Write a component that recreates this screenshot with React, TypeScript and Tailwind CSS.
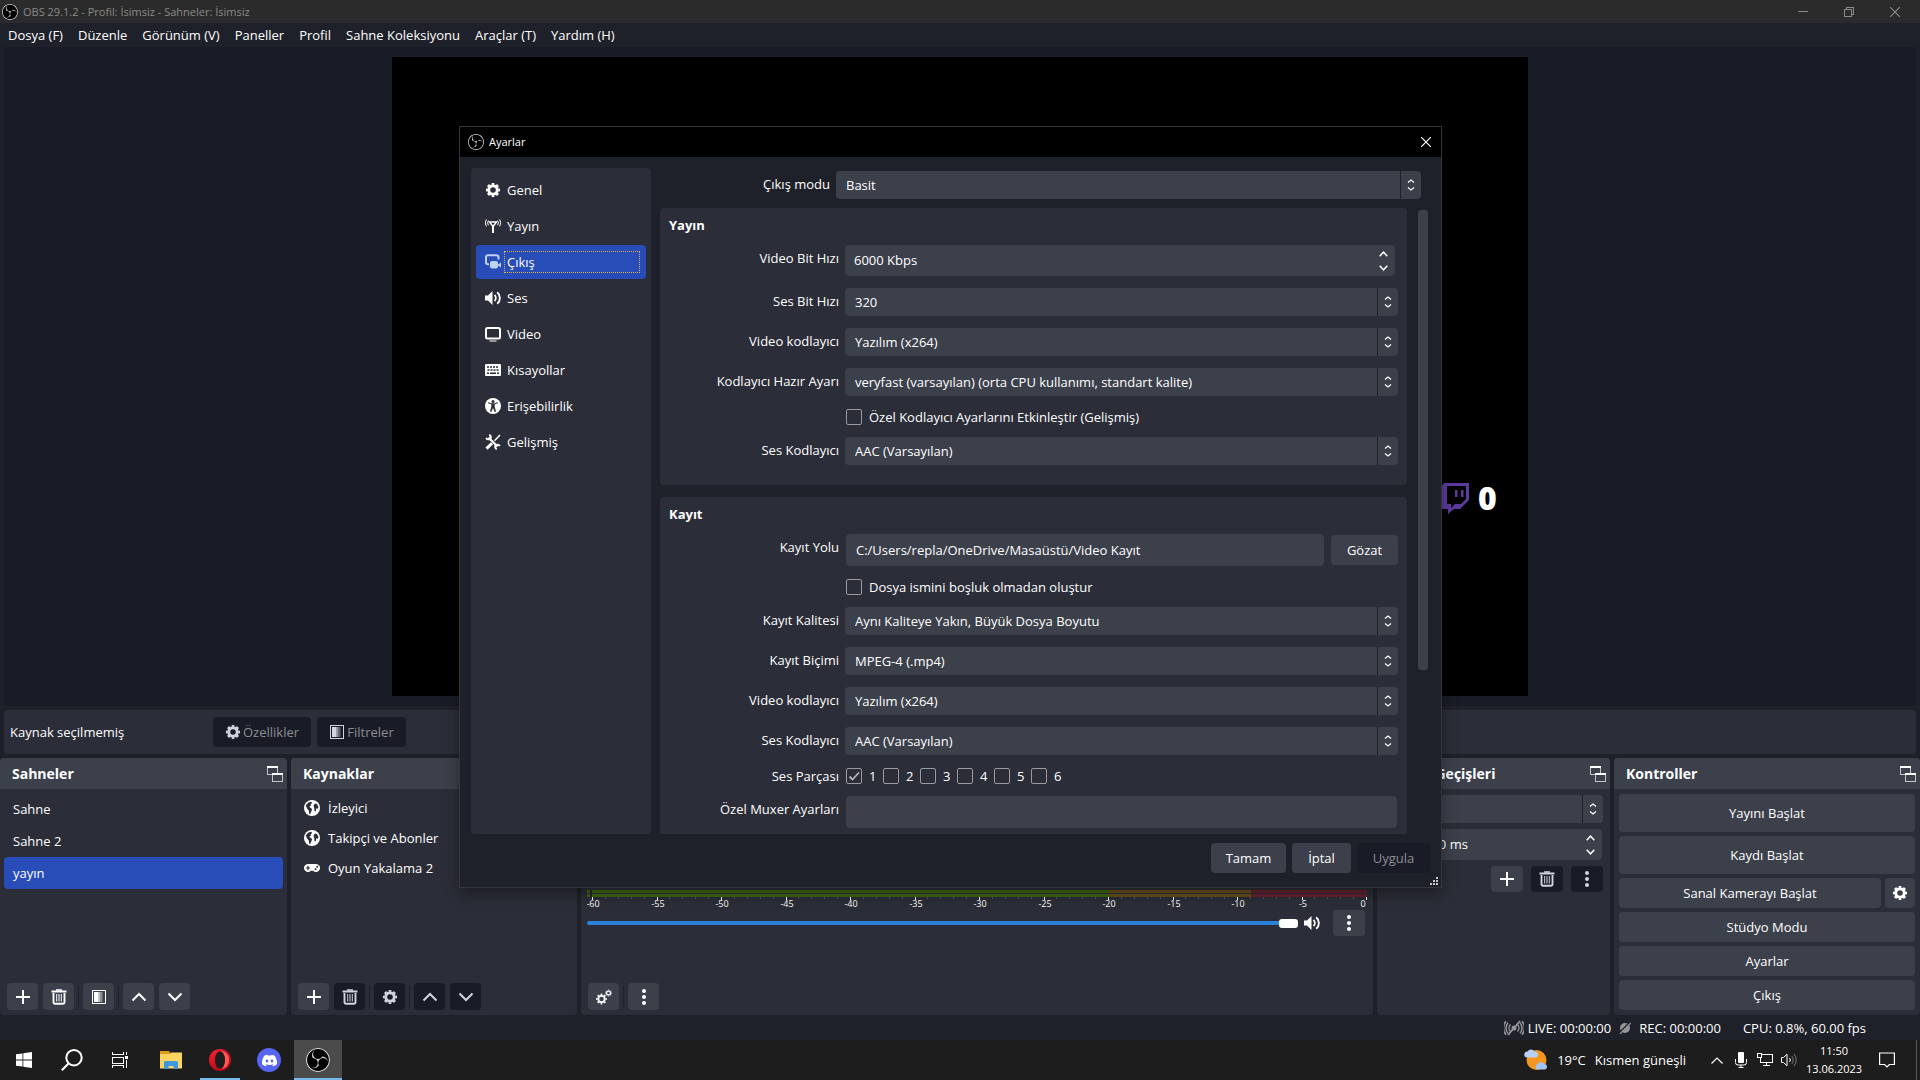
import type { ReactNode } from 'react';
import { FaGamepad } from 'react-icons/fa';
import { SiDiscord, SiObsstudio } from 'react-icons/si';

interface IconProps {
  className?: string;
}

function GearIcon({ className = 'w-4 h-4' }: IconProps) {
  return (
    <svg viewBox="0 0 16 16" className={className} fill="none" stroke="currentColor">
      <circle cx="8" cy="8" r="4.3" strokeWidth="3" />
      <circle cx="8" cy="8" r="6.2" strokeWidth="1.8" pathLength="16" strokeDasharray="1.1 0.9" strokeDashoffset="0.55" />
    </svg>
  );
}

function GearsIcon() {
  return (
    <svg viewBox="0 0 16 16" className="w-4 h-4" fill="none" stroke="currentColor">
      <circle cx="5.5" cy="10" r="3.2" strokeWidth="1.8" />
      <circle cx="5.5" cy="10" r="4.7" strokeWidth="1.4" pathLength="16" strokeDasharray="1 1" strokeDashoffset="0.5" />
      <circle cx="12.5" cy="4" r="1.9" strokeWidth="1.2" />
      <circle cx="12.5" cy="4" r="3" strokeWidth="1" pathLength="16" strokeDasharray="1 1" strokeDashoffset="0.5" />
    </svg>
  );
}

function AntennaIcon() {
  return (
    <svg viewBox="0 0 16 16" className="w-4 h-4" fill="none" stroke="currentColor">
      <path d="M8 7v8" strokeWidth="2" />
      <path d="M4.5 4h7L8 8.5z" strokeWidth="1.4" />
      <path d="M3.4 2.6a4 4 0 0 0 0 4.6M12.6 2.6a4 4 0 0 1 0 4.6M1.4 1.4a6.5 6.5 0 0 0 0 7M14.6 1.4a6.5 6.5 0 0 1 0 7" strokeWidth="1" />
    </svg>
  );
}

function OutputIcon() {
  return (
    <svg viewBox="0 0 16 16" className="w-4 h-4 text-[#bcd3f5]">
      <path d="M4 10.2H3A1.8 1.8 0 0 1 1 8.4V3.2A2 2 0 0 1 3 1.2h8.5a2 2 0 0 1 2 2V5.5" fill="none" stroke="currentColor" strokeWidth="2" />
      <rect x="5" y="7" width="8" height="7.5" rx="2" fill="currentColor" />
      <path d="M13 10.5l3-2v5l-3-2z" fill="currentColor" />
    </svg>
  );
}

function SpeakerIcon() {
  return (
    <svg viewBox="0 0 16 16" className="w-4 h-4" fill="none" stroke="currentColor">
      <path d="M0 5.5h3L7.5 1v14L3 10.5H0z" fill="currentColor" stroke="none" />
      <path d="M9.5 5a4 4 0 0 1 0 6" strokeWidth="1.7" />
      <path d="M12.2 2.2a7.6 7.6 0 0 1 0 11.6" strokeWidth="1.9" />
    </svg>
  );
}

function DisplayIcon() {
  return (
    <svg viewBox="0 0 16 16" className="w-4 h-4" fill="none" stroke="currentColor">
      <rect x="1" y="2" width="14" height="10.5" rx="1.5" strokeWidth="2" />
      <path d="M4.500 15h7" strokeWidth="1" />
    </svg>
  );
}

function KeyboardIcon() {
  return (
    <svg viewBox="0 0 16 16" className="w-4 h-4">
      <rect x="0" y="2" width="16" height="12" rx="1" fill="currentColor" />
      <path d="M2 5h12M2.500 8h11" stroke="#2b2d38" strokeWidth="1.7" strokeDasharray="2 1" />
      <path d="M2 11.2h2M5 11.2h6M12 11.2h2" stroke="#2b2d38" strokeWidth="1.5" />
    </svg>
  );
}

function AccessibilityIcon() {
  return (
    <svg viewBox="0 0 16 16" className="w-4 h-4">
      <circle cx="8" cy="8" r="8" fill="currentColor" />
      <circle cx="8" cy="3.4" r="1.5" fill="#2b2d38" />
      <path d="M3 5.200l3.300 1v2.600L5 13.500l1.300.4L8 10l1.700 3.900 1.300-.4-1.300-4.700V6.200l3.300-1-.3-.9-3.200.9H6.500l-3.200-.9z" fill="#2b2d38" />
    </svg>
  );
}

function ToolsIcon() {
  return (
    <svg viewBox="0 0 16 16" className="w-4 h-4" fill="none" stroke="currentColor">
      <path d="M3.500 3.500l9 9" strokeWidth="2.2" />
      <path d="M1.200 3.800A2.600 2.600 0 0 0 5.500 4.500 2.600 2.600 0 0 0 4.200.8M14.800 12.200a2.600 2.600 0 0 0-4.300-.7 2.600 2.600 0 0 0 1.300 3.700" strokeWidth="1.9" />
      <path d="M15 1L9.500 6.800" strokeWidth="1.5" />
      <path d="M7 9.200L1.500 14.600" strokeWidth="3" />
    </svg>
  );
}

function GlobeIcon() {
  return (
    <svg viewBox="0 0 16 16" className="w-4 h-4">
      <circle cx="8" cy="8" r="8" fill="currentColor" />
      <path d="M1.800 5.200L4.500 2.500l3-.8.5 1.500-1.500 1 .5 1.500-1.800 1 1.800 1.500 1.200.8-.7 2-1.300 3-1-.3-.4-3.200L3 8.500z" fill="#2b2d38" />
      <path d="M9.500 5.500l1.500-2 2 .5 1.500 3-.8 2-1.200-1-.8 3.500-1.200-.5-.3-3z" fill="#2b2d38" />
    </svg>
  );
}

function FilterIcon({ className = 'w-4 h-4' }: IconProps) {
  return (
    <svg viewBox="0 0 16 16" className={className} fill="currentColor" shapeRendering="crispEdges">
      <rect x="1.5" y="1.5" width="13" height="13" fill="none" stroke="currentColor" />
      <rect x="3" y="3" width="4" height="10" />
      <rect x="7" y="3" width="2" height="10" opacity="0.7" />
      <rect x="9" y="3" width="2" height="10" opacity="0.4" />
      <rect x="11" y="3" width="1" height="10" opacity="0.2" />
    </svg>
  );
}

function PlusIcon() {
  return (
    <svg viewBox="0 0 16 16" className="w-4 h-4" stroke="currentColor" strokeWidth="2" shapeRendering="crispEdges">
      <path d="M8 1v14M1 8h14" />
    </svg>
  );
}

function TrashIcon() {
  return (
    <svg viewBox="0 0 16 16" className="w-4 h-4" fill="none" stroke="currentColor">
      <path d="M.5 2.500h15" strokeWidth="1.8" />
      <path d="M5 1h6" strokeWidth="1.4" />
      <path d="M2.500 4v9a1.800 1.800 0 0 0 1.800 1.800h7.400a1.800 1.800 0 0 0 1.800-1.800V4" strokeWidth="1.9" />
      <path d="M5.700 5v7.500M8 5v7.500M10.300 5v7.500" strokeWidth="1" />
    </svg>
  );
}

function ChevronIcon({ down = false }: { down?: boolean }) {
  return (
    <svg viewBox="0 0 16 16" className="w-4 h-4" fill="none" stroke="currentColor" strokeWidth="2">
      <path d={down ? 'M1.500 4.500L8 11l6.500-6.500' : 'M1.500 11.500L8 5l6.500 6.500'} />
    </svg>
  );
}

function DotsIcon() {
  return (
    <svg viewBox="0 0 16 16" className="w-4 h-4" fill="currentColor">
      <circle cx="8" cy="2" r="2" />
      <circle cx="8" cy="8" r="2" />
      <circle cx="8" cy="14" r="2" />
    </svg>
  );
}

function PopoutIcon() {
  return (
    <svg viewBox="0 0 16 16" className="w-4 h-4" fill="#3c404b" stroke="#c4c5c9" shapeRendering="crispEdges">
      <rect x="0.5" y="1" width="10" height="7.5" />
      <path d="M0 1h11" stroke="#fff" strokeWidth="2" />
      <rect x="5.5" y="8" width="10" height="7.5" />
      <path d="M5 8h11" stroke="#fff" strokeWidth="2" />
    </svg>
  );
}

function CloseIcon() {
  return (
    <svg viewBox="0 0 10 10" className="w-[10px] h-[10px]" stroke="currentColor" strokeWidth="1.2">
      <path d="M0 0l10 10M10 0L0 10" />
    </svg>
  );
}

function ObsLogo({ className }: { className: string }) {
  return (
    <span className="rounded-full bg-black text-[#d8d8d8]">
      <SiObsstudio className={className} />
    </span>
  );
}

interface FieldProps {
  id: string;
  value: string;
  ariaLabel?: string;
}

function Combo({ id, value, ariaLabel }: FieldProps) {
  return (
    <div className="relative h-7 w-full">
      <select id={id} aria-label={ariaLabel} defaultValue={value} className="h-7 w-full appearance-none rounded bg-[#3c404b] pl-[10px] pr-6 text-white outline-none">
        <option>{value}</option>
      </select>
      <span className="pointer-events-none absolute inset-y-0 right-0 flex w-[21px] items-center justify-center border-l border-[#1f212a]">
        <svg viewBox="0 0 8 14" className="h-[14px] w-2" fill="none" stroke="#fff" strokeWidth="1.2">
          <path d="M1 4.500L4 2l3 2.500M1 9.500L4 12l3-2.500" />
        </svg>
      </span>
    </div>
  );
}

function Spin({ id, value, ariaLabel }: FieldProps) {
  return (
    <div className="relative h-[31px] min-w-0 flex-1">
      <input id={id} aria-label={ariaLabel} type="text" defaultValue={value} className="h-full w-full rounded bg-[#3c404b] px-[9px] pb-[2px] text-white outline-none" />
      <div className="absolute inset-y-0 right-[7px] flex flex-col justify-center gap-1">
        <button type="button" aria-label="+" className="flex h-[10px] items-center">
          <svg viewBox="0 0 9 6" className="h-[6px] w-[9px]" fill="none" stroke="#fff" strokeWidth="1.5">
            <path d="M.7 5.200L4.500 1.200l3.800 4" />
          </svg>
        </button>
        <button type="button" aria-label="-" className="flex h-[10px] items-center">
          <svg viewBox="0 0 9 6" className="h-[6px] w-[9px]" fill="none" stroke="#fff" strokeWidth="1.5">
            <path d="M.7.8l3.800 4 3.800-4" />
          </svg>
        </button>
      </div>
    </div>
  );
}

function Check({ label, checked = false }: { label: string; checked?: boolean }) {
  return (
    <label className="flex h-[17px] items-center gap-[7px] pl-px">
      <span className="grid h-4 w-4">
        <input type="checkbox" defaultChecked={checked} className="peer col-start-1 row-start-1 h-4 w-4 appearance-none rounded-[2px] border border-[#9a9a9e]" />
        <svg viewBox="0 0 16 16" className="pointer-events-none invisible col-start-1 row-start-1 h-4 w-4 peer-checked:visible" fill="none" stroke="#b4b4b8" strokeWidth="1.8">
          <path d="M3.500 8.500l3 3 6.500-7" />
        </svg>
      </span>
      {label}
    </label>
  );
}

interface RowProps {
  label?: string;
  htmlFor?: string;
  children: ReactNode;
}

function Row({ label, htmlFor, children }: RowProps) {
  return (
    <div className="grid grid-cols-[170px_1fr] items-start gap-[6px]">
      {label ? <label htmlFor={htmlFor} className="pt-1 text-right">{label}</label> : <span />}
      {children}
    </div>
  );
}

function Group({ title, className = '', children }: { title: string; className?: string; children: ReactNode }) {
  return (
    <section className={`rounded bg-[#2b2d38] px-[9px] pt-2 ${className}`}>
      <h3 className="mb-[11px] h-[18px] font-bold leading-[18px]">{title}</h3>
      <div className="flex flex-col gap-3">{children}</div>
    </section>
  );
}

function Dock({ title, popout = true, children }: { title: string; popout?: boolean; children: ReactNode }) {
  return (
    <section className="flex min-w-0 flex-col overflow-hidden rounded bg-[#2b2d38]">
      <header className="flex h-[31px] shrink-0 items-center justify-between bg-[#3c404b] pl-3 pr-1">
        <h2 className="text-sm font-bold whitespace-nowrap">{title}</h2>
        {popout && <PopoutIcon />}
      </header>
      {children}
    </section>
  );
}

function ToolButton({ label, disabled = false, children }: { label: string; disabled?: boolean; children: ReactNode }) {
  return (
    <button
      type="button"
      aria-label={label}
      disabled={disabled}
      className="flex h-[27px] w-[31px] items-center justify-center rounded bg-[#3c404b] disabled:bg-[#191b26] disabled:text-[#d2d4e0]"
    >
      {children}
    </button>
  );
}

function Separator() {
  return <span className="-mx-px h-[21px] w-px bg-[#1f212a]" />;
}

const menus = ['Dosya (F)', 'Düzenle', 'Görünüm (V)', 'Paneller', 'Profil', 'Sahne Koleksiyonu', 'Araçlar (T)', 'Yardım (H)'];

const pages = [
  { name: 'Genel', icon: <GearIcon /> },
  { name: 'Yayın', icon: <AntennaIcon /> },
  { name: 'Çıkış', icon: <OutputIcon /> },
  { name: 'Ses', icon: <SpeakerIcon /> },
  { name: 'Video', icon: <DisplayIcon /> },
  { name: 'Kısayollar', icon: <KeyboardIcon /> },
  { name: 'Erişebilirlik', icon: <AccessibilityIcon /> },
  { name: 'Gelişmiş', icon: <ToolsIcon /> }
];

const sources = [
  { name: 'İzleyici', icon: <GlobeIcon /> },
  { name: 'Takipçi ve Abonler', icon: <GlobeIcon /> },
  { name: 'Oyun Yakalama 2', icon: <FaGamepad className="w-4 h-4" /> }
];

function SettingsDialog() {
  return (
    <div role="dialog" aria-label="Ayarlar" className="absolute left-[459px] top-[126px] flex h-[762px] w-[983px] flex-col border border-[#35363b] bg-[#1f212a] shadow-[0_6px_14px_rgba(0,0,0,0.35)]">
      <header className="flex h-[30px] shrink-0 items-center bg-black pl-2 pr-[10px]">
        <ObsLogo className="h-4 w-4" />
        <h2 className="ml-[5px] flex-1 text-[11px]">Ayarlar</h2>
        <button type="button" aria-label="Kapat"><CloseIcon /></button>
      </header>

      <div className="flex min-h-0 flex-1 gap-[9px] px-[11px] pt-[11px]">
        <nav className="flex w-[180px] shrink-0 flex-col gap-[2px] rounded bg-[#2b2d38] p-[5px]">
          {pages.map((page) => (
            <button
              type="button"
              key={page.name}
              className={`flex h-[34px] items-center gap-[3px] rounded pl-[9px] pr-[6px] text-left ${page.name === 'Çıkış' ? 'bg-[#284cb8]' : ''}`}
            >
              {page.icon}
              <span className={`flex h-[22px] flex-1 items-center border border-dotted pl-[2px] ${page.name === 'Çıkış' ? 'border-[#d7b347]' : 'border-transparent'}`}>
                {page.name}
              </span>
            </button>
          ))}
        </nav>

        <div className="flex min-w-0 flex-1 flex-col">
          <div className="mt-[3px] mb-[9px] grid grid-cols-[170px_1fr] items-center gap-[6px] pr-[9px]">
            <label htmlFor="mode" className="pb-[2px] text-right">Çıkış modu</label>
            <Combo id="mode" value="Basit" />
          </div>

          <div className="flex min-h-0 flex-1 gap-[11px] overflow-hidden">
            <div className="flex min-w-0 flex-1 flex-col gap-3">
              <Group title="Yayın" className="pb-[20px]">
                <Row label="Video Bit Hızı" htmlFor="vbit">
                  <div className="flex pr-[3px]"><Spin id="vbit" value="6000 Kbps" /></div>
                </Row>
                <Row label="Ses Bit Hızı" htmlFor="abit"><Combo id="abit" value="320" /></Row>
                <Row label="Video kodlayıcı" htmlFor="venc"><Combo id="venc" value="Yazılım (x264)" /></Row>
                <Row label="Kodlayıcı Hazır Ayarı" htmlFor="preset">
                  <Combo id="preset" value="veryfast (varsayılan) (orta CPU kullanımı, standart kalite)" />
                </Row>
                <Row><Check label="Özel Kodlayıcı Ayarlarını Etkinleştir (Gelişmiş)" /></Row>
                <Row label="Ses Kodlayıcı" htmlFor="aenc"><Combo id="aenc" value="AAC (Varsayılan)" /></Row>
              </Group>

              <Group title="Kayıt" className="rounded-b-none pb-[6px]">
                <Row label="Kayıt Yolu" htmlFor="path">
                  <div className="flex items-center gap-[7px] pl-px">
                    <input id="path" type="text" defaultValue="C:/Users/repla/OneDrive/Masaüstü/Video Kayıt" className="h-8 min-w-0 flex-1 rounded bg-[#3c404b] px-[10px] text-white outline-none" />
                    <button type="button" className="h-[30px] w-[67px] rounded bg-[#3c404b]">Gözat</button>
                  </div>
                </Row>
                <Row><Check label="Dosya ismini boşluk olmadan oluştur" /></Row>
                <Row label="Kayıt Kalitesi" htmlFor="quality"><Combo id="quality" value="Aynı Kaliteye Yakın, Büyük Dosya Boyutu" /></Row>
                <Row label="Kayıt Biçimi" htmlFor="format"><Combo id="format" value="MPEG-4 (.mp4)" /></Row>
                <Row label="Video kodlayıcı" htmlFor="rvenc"><Combo id="rvenc" value="Yazılım (x264)" /></Row>
                <Row label="Ses Kodlayıcı" htmlFor="raenc"><Combo id="raenc" value="AAC (Varsayılan)" /></Row>
                <fieldset className="grid h-[17px] grid-cols-[170px_1fr] items-center gap-[6px]">
                  <span className="text-right">Ses Parçası</span>
                  <div className="grid grid-cols-[repeat(6,37px)]">
                    {['1', '2', '3', '4', '5', '6'].map((track) => (
                      <Check key={track} label={track} checked={track === '1'} />
                    ))}
                  </div>
                </fieldset>
                <Row label="Özel Muxer Ayarları" htmlFor="muxer">
                  <div className="flex px-px">
                    <input id="muxer" type="text" className="h-8 w-full rounded bg-[#3c404b] px-[10px] outline-none" />
                  </div>
                </Row>
              </Group>
            </div>
            <div className="mr-[2px] mt-[2px] h-[460px] w-[10px] rounded-[3px] bg-[#3c404b]" />
          </div>
        </div>
      </div>

      <footer className="relative flex h-[53px] shrink-0 items-start justify-end gap-[6px] pr-[11px] pt-[9px]">
        <button type="button" className="h-[30px] w-[75px] rounded bg-[#3c404b]">Tamam</button>
        <button type="button" className="h-[30px] w-[59px] rounded bg-[#3c404b]">İptal</button>
        <button type="button" disabled className="h-[30px] w-[73px] rounded bg-[#191b26] text-[#8d8d90]">Uygula</button>
        <svg viewBox="0 0 8 8" className="absolute right-[3px] bottom-[2px] h-2 w-2" fill="#c8c8c8" shapeRendering="crispEdges">
          <path d="M6 0h2v2H6zM3 3h2v2H3zM6 3h2v2H6zM0 6h2v2H0zM3 6h2v2H3zM6 6h2v2H6z" />
        </svg>
      </footer>
    </div>
  );
}

function Meter() {
  const ticks = Array.from({ length: 61 }, (_, i) => i);

  return (
    <svg viewBox="0 0 780 20" className="block w-full" fontFamily="Open Sans" fontSize="9">
      {[0, 4].map((y) => (
        <g key={y}>
          <rect x="0" y={y} width="522" height="3" fill="#3e6611" />
          <rect x="522" y={y} width="142" height="3" fill="#66501a" />
          <rect x="664" y={y} width="116" height="3" fill="#69222f" />
          <rect x="3" y={y} width="2" height="3" fill="#23252c" />
        </g>
      ))}
      {ticks.map((i) => (
        <rect
          key={i}
          x={Math.round(5 + i * 12.9)}
          y="7"
          width="1"
          height={i % 5 === 0 ? 3 : 2}
          fill={i % 5 === 0 ? '#fff' : '#56575c'}
        />
      ))}
      {ticks.filter((i) => i % 5 === 0).map((i) => (
        <text key={i} x={i === 60 ? 776 : Math.round(6 + i * 12.9)} y="17" textAnchor="middle" fill="#fff">
          {i === 60 ? '0' : i - 60}
        </text>
      ))}
    </svg>
  );
}

function Docks() {
  return (
    <div className="mt-1 grid shrink-0 grid-cols-[287fr_286fr_792fr_233fr_306fr] gap-1">
      <Dock title="Sahneler">
        <ul className="flex-1 px-1 pt-1">
          {['Sahne', 'Sahne 2', 'yayın'].map((scene) => (
            <li key={scene} className={`flex h-8 items-center rounded px-[9px] ${scene === 'yayın' ? 'bg-[#284cb8]' : ''}`}>
              {scene}
            </li>
          ))}
        </ul>
        <div className="flex items-center gap-[5px] pb-[5px] pl-[7px]">
          <ToolButton label="Ekle"><PlusIcon /></ToolButton>
          <ToolButton label="Sil"><TrashIcon /></ToolButton>
          <Separator />
          <ToolButton label="Filtreler"><FilterIcon /></ToolButton>
          <Separator />
          <ToolButton label="Yukarı"><ChevronIcon /></ToolButton>
          <ToolButton label="Aşağı"><ChevronIcon down /></ToolButton>
        </div>
      </Dock>

      <Dock title="Kaynaklar">
        <ul className="flex-1 pl-[13px] pt-1">
          {sources.map((source) => (
            <li key={source.name} className="flex h-[30px] items-center gap-2">
              {source.icon}
              {source.name}
            </li>
          ))}
        </ul>
        <div className="flex items-center gap-[5px] pb-[5px] pl-[7px]">
          <ToolButton label="Ekle"><PlusIcon /></ToolButton>
          <ToolButton label="Sil" disabled><TrashIcon /></ToolButton>
          <Separator />
          <ToolButton label="Özellikler" disabled><GearIcon /></ToolButton>
          <Separator />
          <ToolButton label="Yukarı" disabled><ChevronIcon /></ToolButton>
          <ToolButton label="Aşağı" disabled><ChevronIcon down /></ToolButton>
        </div>
      </Dock>

      <Dock title="" popout={false}>
        <div className="flex-1 px-[6px] pt-[101px]">
          <Meter />
          <div className="flex items-center gap-[6px]">
            <input
              type="range"
              aria-label="Ses seviyesi"
              defaultValue={100}
              className="h-1 min-w-0 flex-1 appearance-none rounded-full bg-[#2a82da] [&::-webkit-slider-thumb]:h-[9px] [&::-webkit-slider-thumb]:w-[19px] [&::-webkit-slider-thumb]:appearance-none [&::-webkit-slider-thumb]:rounded-[3px] [&::-webkit-slider-thumb]:bg-white"
            />
            <SpeakerIcon />
            <button type="button" aria-label="Seçenekler" className="ml-[7px] mr-[2px] flex h-[26px] w-8 items-center justify-center rounded bg-[#3c404b]">
              <DotsIcon />
            </button>
          </div>
        </div>
        <div className="flex items-center gap-[5px] pb-[5px] pl-[7px]">
          <ToolButton label="Gelişmiş ses"><GearsIcon /></ToolButton>
          <Separator />
          <ToolButton label="Menü"><DotsIcon /></ToolButton>
        </div>
      </Dock>

      <Dock title="Sahne Geçişleri">
        <div className="flex flex-col gap-[6px] px-[7px] pt-[6px]">
          <Combo id="transition" value="" ariaLabel="Geçiş" />
          <div className="flex items-center pl-[31px] pr-px">
            <Spin id="duration" value="300 ms" ariaLabel="Süre" />
          </div>
          <div className="flex justify-end gap-2">
            <button type="button" aria-label="Ekle" className="flex h-[26px] w-8 items-center justify-center rounded bg-[#3c404b]"><PlusIcon /></button>
            <button type="button" aria-label="Sil" disabled className="flex h-[26px] w-8 items-center justify-center rounded bg-[#191b26] text-[#d2d4e0]"><TrashIcon /></button>
            <button type="button" aria-label="Menü" disabled className="flex h-[26px] w-8 items-center justify-center rounded bg-[#191b26] text-[#d2d4e0]"><DotsIcon /></button>
          </div>
        </div>
      </Dock>

      <Dock title="Kontroller">
        <div className="flex flex-col gap-1 p-[5px]">
          <button type="button" className="h-[38px] rounded bg-[#3c404b]">Yayını Başlat</button>
          <button type="button" className="h-[38px] rounded bg-[#3c404b]">Kaydı Başlat</button>
          <div className="flex gap-1">
            <button type="button" className="h-[30px] flex-1 rounded bg-[#3c404b]">Sanal Kamerayı Başlat</button>
            <button type="button" aria-label="Sanal kamera ayarları" className="flex h-[30px] w-[30px] items-center justify-center rounded bg-[#3c404b]">
              <GearIcon />
            </button>
          </div>
          <button type="button" className="h-[30px] rounded bg-[#3c404b]">Stüdyo Modu</button>
          <button type="button" className="h-[30px] rounded bg-[#3c404b]">Ayarlar</button>
          <button type="button" className="h-[30px] rounded bg-[#3c404b]">Çıkış</button>
        </div>
      </Dock>
    </div>
  );
}

function StatusBar() {
  return (
    <div className="flex h-[25px] shrink-0 items-center justify-end pr-[54px]">
      <svg viewBox="0 0 20 16" className="mr-1 h-4 w-5" fill="none" stroke="#96969a" strokeWidth="1.5">
        <circle cx="10" cy="8" r="2.5" fill="#96969a" stroke="none" />
        <path d="M6.500 4.500a5 5 0 0 0 0 7M13.500 4.500a5 5 0 0 1 0 7M4 2.700a8 8 0 0 0 0 10.600M16 2.700a8 8 0 0 1 0 10.600M2 1.200a10.500 10.500 0 0 0 0 13.600M18 1.200a10.500 10.500 0 0 1 0 13.600" />
        <path d="M4 15L16 1" strokeWidth="1.8" />
      </svg>
      <span>LIVE: 00:00:00</span>
      <svg viewBox="0 0 12 12" className="mx-2 h-3 w-3">
        <circle cx="6" cy="6" r="5" fill="#96969a" />
        <path d="M0 11L11 0" stroke="#1f212a" strokeWidth="1.5" />
        <path d="M1 12L12 1" stroke="#96969a" strokeWidth="1.2" />
      </svg>
      <span>REC: 00:00:00</span>
      <span className="ml-[22px]">CPU: 0.8%, 60.00 fps</span>
    </div>
  );
}

function Taskbar() {
  return (
    <footer className="flex h-10 shrink-0 items-stretch bg-[#1d1d1d]">
      <button type="button" aria-label="Başlat" className="flex w-12 items-center justify-center">
        <svg viewBox="0 0 16 16" className="h-4 w-4" fill="#fff">
          <path d="M0 2.300l6.500-.9v6.200H0zM7.300 1.300L16 0v7.600H7.300zM0 8.400h6.500v6.200L0 13.700zM7.300 8.400H16V16l-8.700-1.200z" />
        </svg>
      </button>
      <button type="button" aria-label="Ara" className="flex w-12 items-center justify-center">
        <svg viewBox="0 0 22 22" className="h-[22px] w-[22px]" fill="none" stroke="#fff" strokeWidth="2">
          <circle cx="13" cy="8.7" r="7.7" />
          <path d="M7.500 14.500L.8 21.200" />
        </svg>
      </button>
      <button type="button" aria-label="Görev görünümü" className="flex w-12 items-center justify-center">
        <svg viewBox="0 0 16 16" className="h-4 w-4" fill="none" stroke="#fff" shapeRendering="crispEdges">
          <path d="M.5 0v2.500h11V0M.5 16v-2.500h11V16M.5 5.500h11v5.500H.500zM14.500 0v3M14.500 8v8" />
          <rect x="13" y="4" width="3" height="3" fill="#fff" stroke="none" />
        </svg>
      </button>

      <div className="ml-[3px] flex gap-px">
        <button type="button" aria-label="Dosya Gezgini" className="flex w-12 items-center justify-center">
          <svg viewBox="0 0 22 18" className="h-[18px] w-[22px]">
            <path d="M0 0h9l1.500 2H22v3H0z" fill="#e09b12" />
            <path d="M0 3h10l1.500-1.500H22V17.500H0z" fill="#fbd462" />
            <path d="M4 18v-6.500a1.500 1.500 0 0 1 1.500-1.500h11a1.500 1.500 0 0 1 1.500 1.500V18h-4.500v-3h-5v3z" fill="#3f97dd" />
          </svg>
        </button>
        <button type="button" aria-label="Opera" className="flex w-12 flex-col items-center">
          <span className="flex flex-1 items-center pt-[2px]">
            <svg viewBox="0 0 22 22" className="h-[22px] w-[22px]">
              <defs>
                <linearGradient id="opera" x1="0" y1="0" x2="0.6" y2="1">
                  <stop offset="0" stopColor="#ff2233" />
                  <stop offset="1" stopColor="#b00818" />
                </linearGradient>
              </defs>
              <ellipse cx="11" cy="11" rx="11" ry="11" fill="url(#opera)" />
              <path d="M11 2c6 0 9 4 9 9s-3 9-9 9c3-1 5-4.500 5-9s-2-8-5-9z" fill="#ff5a55" />
              <ellipse cx="11" cy="11" rx="5" ry="8.7" fill="#1d1d1d" />
            </svg>
          </span>
          <span className="h-[2px] w-10 bg-[#76b9ed]" />
        </button>
        <button type="button" aria-label="Discord" className="flex w-12 items-center justify-center">
          <span className="flex h-6 w-6 items-center justify-center rounded-full bg-[#5865f2]">
            <SiDiscord className="h-[15px] w-[15px] text-white" />
          </span>
        </button>
        <button type="button" aria-label="OBS" className="flex w-12 flex-col items-center bg-[#4b4b4b]">
          <span className="flex flex-1 items-center pt-[2px]">
            <ObsLogo className="h-6 w-6" />
          </span>
          <span className="h-[2px] w-full bg-[#76b9ed]" />
        </button>
      </div>

      <div className="ml-auto flex items-center">
        <svg viewBox="0 0 24 24" className="h-6 w-6">
          <circle cx="12.5" cy="12" r="10" fill="#f7961d" />
          <path d="M3 9.500a3 3 0 0 1 .5-6 4 4 0 0 1 7 0 3 3 0 0 1 1 6z" fill="#b9d0f5" />
          <path d="M13 21.500a3 3 0 0 1 .5-5.500 4 4 0 0 1 7 0 2.800 2.800 0 0 1 .5 5.500z" fill="#a3c3f2" />
        </svg>
        <span className="ml-[9px]">19°C</span>
        <span className="ml-[9px]">Kısmen güneşli</span>
        <svg viewBox="0 0 12 7" className="ml-[25px] h-[7px] w-3" fill="none" stroke="#fff" strokeWidth="1.2">
          <path d="M.5 6.500L6 1l5.500 5.500" />
        </svg>
        <svg viewBox="0 0 12 16" className="ml-3 h-4 w-3" fill="none" stroke="#fff">
          <rect x="3" y="0" width="6" height="11" rx="1" fill="#fff" stroke="none" />
          <path d="M.5 7v3.500a2.500 2.500 0 0 0 2.500 2.500h6a2.500 2.500 0 0 0 2.500-2.500V7M6 13v2.500M3.500 15.500h5" />
        </svg>
        <svg viewBox="0 0 16 14" className="ml-[10px] h-[14px] w-4" fill="none" stroke="#fff" shapeRendering="crispEdges">
          <path d="M5 1.500h10.500v8H3.500V5M9.500 9.500v3M6 12.500h7" />
          <rect x="0.5" y="0.5" width="4" height="4" />
        </svg>
        <svg viewBox="0 0 16 14" className="ml-2 h-[14px] w-4" fill="none" stroke="#fff">
          <path d="M.5 4.500h2L6 1.200v11.600L2.500 9.500h-2z" />
          <path d="M8.500 5a3 3 0 0 1 0 4" />
          <path d="M10.700 3a6 6 0 0 1 0 8M13 1a9 9 0 0 1 0 12" stroke="#777" />
        </svg>
        <div className="ml-2 w-[58px] text-center text-[11px] leading-[18px]">
          <div>11:50</div>
          <div>13.06.2023</div>
        </div>
        <svg viewBox="0 0 16 16" className="ml-4 h-4 w-4" fill="none" stroke="#fff" strokeWidth="1.2">
          <path d="M.6 1h14.800v11.500h-5L8 15l-2.400-2.500h-5z" />
        </svg>
        <span className="ml-[21px] mr-[3px] h-10 w-px bg-[#5a5a5a]" />
      </div>
    </footer>
  );
}

export default function App() {
  return (
    <div className="relative flex h-screen w-full flex-col overflow-hidden bg-[#1f212a] font-['Open_Sans',sans-serif] text-[13px] leading-[18px] text-white">
      <header className="flex h-[23px] shrink-0 items-center bg-[#2b2b2b] px-[2px] text-[#8a8a8a]">
        <ObsLogo className="h-4 w-4" />
        <h1 className="ml-[5px] flex-1 text-[11px]">OBS 29.1.2 - Profil: İsimsiz - Sahneler: İsimsiz</h1>
        <button type="button" aria-label="Simge durumuna küçült" className="flex h-5 w-[46px] items-center justify-center">
          <span className="h-px w-[10px] bg-[#8a8a8a]" />
        </button>
        <button type="button" aria-label="Önceki boyut" className="flex h-5 w-[46px] items-center justify-center">
          <svg viewBox="0 0 10 10" className="h-[10px] w-[10px]" fill="none" stroke="currentColor" shapeRendering="crispEdges">
            <path d="M.5 2.500h7v7h-7zM2.500 2.500v-2h7v7h-2" />
          </svg>
        </button>
        <button type="button" aria-label="Kapat" className="flex h-5 w-[46px] items-center justify-center"><CloseIcon /></button>
      </header>

      <nav className="flex h-6 shrink-0 items-center gap-[15px] px-2">
        {menus.map((menu) => (
          <button type="button" key={menu}>{menu}</button>
        ))}
      </nav>

      <main className="mx-1 flex min-h-0 flex-1 justify-center bg-[#191b26] py-[10px]">
        <div className="relative aspect-video h-full bg-black">
          <div className="absolute left-[1045px] top-[425px] flex items-center gap-[8px]">
            <svg viewBox="0 0 33 32" className="h-8 w-[33px]">
              <path d="M7 1h25v17l-9 9h-6l-6 5v-5H2V7z" fill="#5c3a9c" />
              <path d="M10 4h19v13l-5 5h-6l-4 4v-4h-4z" fill="#000" />
              <path d="M18 8h2.500v7H18zM24 8h2.500v7H24z" fill="#5c3a9c" />
            </svg>
            <span className="text-[32px] font-extrabold leading-8">0</span>
          </div>
        </div>
      </main>

      <div className="mx-1 mt-1 flex h-11 shrink-0 items-center rounded bg-[#2b2d38] pl-[6px]">
        <span className="w-[203px]">Kaynak seçilmemiş</span>
        <button type="button" disabled className="flex h-[30px] w-[98px] items-center justify-center gap-[2px] rounded bg-[#191b26] text-[#8d8d90]">
          <GearIcon className="h-4 w-4 text-[#d2d4e0]" />
          Özellikler
        </button>
        <button type="button" disabled className="ml-[6px] flex h-[30px] w-[89px] items-center justify-center gap-[2px] rounded bg-[#191b26] text-[#8d8d90]">
          <FilterIcon className="h-4 w-4 text-[#d2d4e0]" />
          Filtreler
        </button>
      </div>

      <Docks />
      <StatusBar />
      <Taskbar />
      <SettingsDialog />
    </div>
  );
}
